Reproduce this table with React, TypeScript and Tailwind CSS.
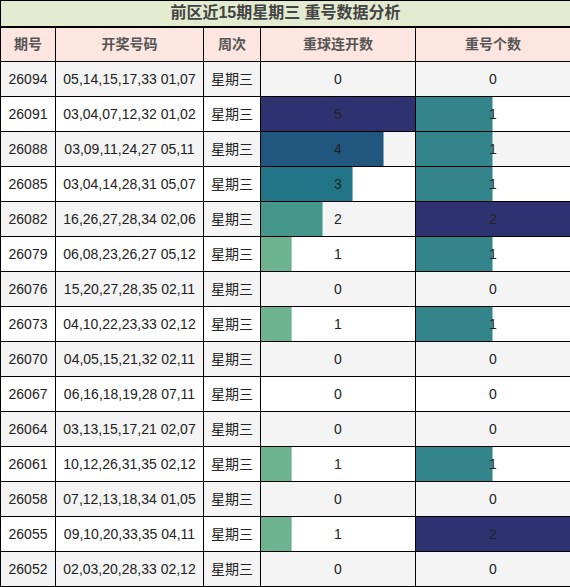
import React from "react";

type Row = { id: string; nums: string; streak: number; repeat: number };

const ROWS: Row[] = [
  { id: "26094", nums: "05,14,15,17,33 01,07", streak: 0, repeat: 0 },
  { id: "26091", nums: "03,04,07,12,32 01,02", streak: 5, repeat: 1 },
  { id: "26088", nums: "03,09,11,24,27 05,11", streak: 4, repeat: 1 },
  { id: "26085", nums: "03,04,14,28,31 05,07", streak: 3, repeat: 1 },
  { id: "26082", nums: "16,26,27,28,34 02,06", streak: 2, repeat: 2 },
  { id: "26079", nums: "06,08,23,26,27 05,12", streak: 1, repeat: 1 },
  { id: "26076", nums: "15,20,27,28,35 02,11", streak: 0, repeat: 0 },
  { id: "26073", nums: "04,10,22,23,33 02,12", streak: 1, repeat: 1 },
  { id: "26070", nums: "04,05,15,21,32 02,11", streak: 0, repeat: 0 },
  { id: "26067", nums: "06,16,18,19,28 07,11", streak: 0, repeat: 0 },
  { id: "26064", nums: "03,13,15,17,21 02,07", streak: 0, repeat: 0 },
  { id: "26061", nums: "10,12,26,31,35 02,12", streak: 1, repeat: 1 },
  { id: "26058", nums: "07,12,13,18,34 01,05", streak: 0, repeat: 0 },
  { id: "26055", nums: "09,10,20,33,35 04,11", streak: 1, repeat: 2 },
  { id: "26052", nums: "02,03,20,28,33 02,12", streak: 0, repeat: 0 },
];

const STREAK_COLORS: Record<number, string> = {
  1: "bg-[#6db38f] border-[#9fd3b8]",
  2: "bg-[#46978b] border-[#8cc6bc]",
  3: "bg-[#227587] border-[#7fb3bf]",
  4: "bg-[#21577f] border-[#7fa3c0]",
  5: "bg-[#2e3270] border-[#2e3270]",
};

const REPEAT_COLORS: Record<number, string> = {
  1: "bg-[#34858b] border-[#8cc3c6]",
  2: "bg-[#2e3270] border-[#2e3270]",
};

const BarCell = ({ value, max, colors }: { value: number; max: number; colors: Record<number, string> }) => (
  <td className="relative border border-black p-0 text-center">
    {value > 0 && (
      <div
        className={`absolute left-0 top-0 bottom-0 border-r ${colors[value]}`}
        style={{ width: `${(value / max) * 100}%` }}
      />
    )}
    <span className="relative">{value}</span>
  </td>
);

export default function App() {
  return (
    <div className="w-[570px] h-[587px] overflow-hidden font-['Liberation_Sans','Noto_Sans_CJK_SC',sans-serif] text-[14px] text-[#222]">
      <table className="w-[570px] border-collapse table-fixed border border-black">
        <colgroup>
          <col className="w-[55px]" />
          <col className="w-[148px]" />
          <col className="w-[57px]" />
          <col className="w-[155px]" />
          <col className="w-[155px]" />
        </colgroup>
        <thead>
          <tr className="h-[26px] bg-[#e2ebd0]">
            <th colSpan={5} className="border border-black border-b-2 text-[16px] font-bold text-[#444] leading-none">
              前区近15期星期三 重号数据分析
            </th>
          </tr>
          <tr className="h-[35px] bg-[#fde5e0] text-[#555]">
            <th className="border border-black font-bold">期号</th>
            <th className="border border-black font-bold">开奖号码</th>
            <th className="border border-black font-bold">周次</th>
            <th className="border border-black font-bold">重球连开数</th>
            <th className="border border-black font-bold">重号个数</th>
          </tr>
        </thead>
        <tbody>
          {ROWS.map((r, i) => (
            <tr key={r.id} className={`h-[35px] ${i % 2 === 0 ? "bg-[#f4f4f4]" : "bg-white"}`}>
              <td className="border border-black text-center">{r.id}</td>
              <td className="border border-black text-center">{r.nums}</td>
              <td className="border border-black text-center">星期三</td>
              <BarCell value={r.streak} max={5} colors={STREAK_COLORS} />
              <BarCell value={r.repeat} max={2} colors={REPEAT_COLORS} />
            </tr>
          ))}
        </tbody>
      </table>
    </div>
  );
}
